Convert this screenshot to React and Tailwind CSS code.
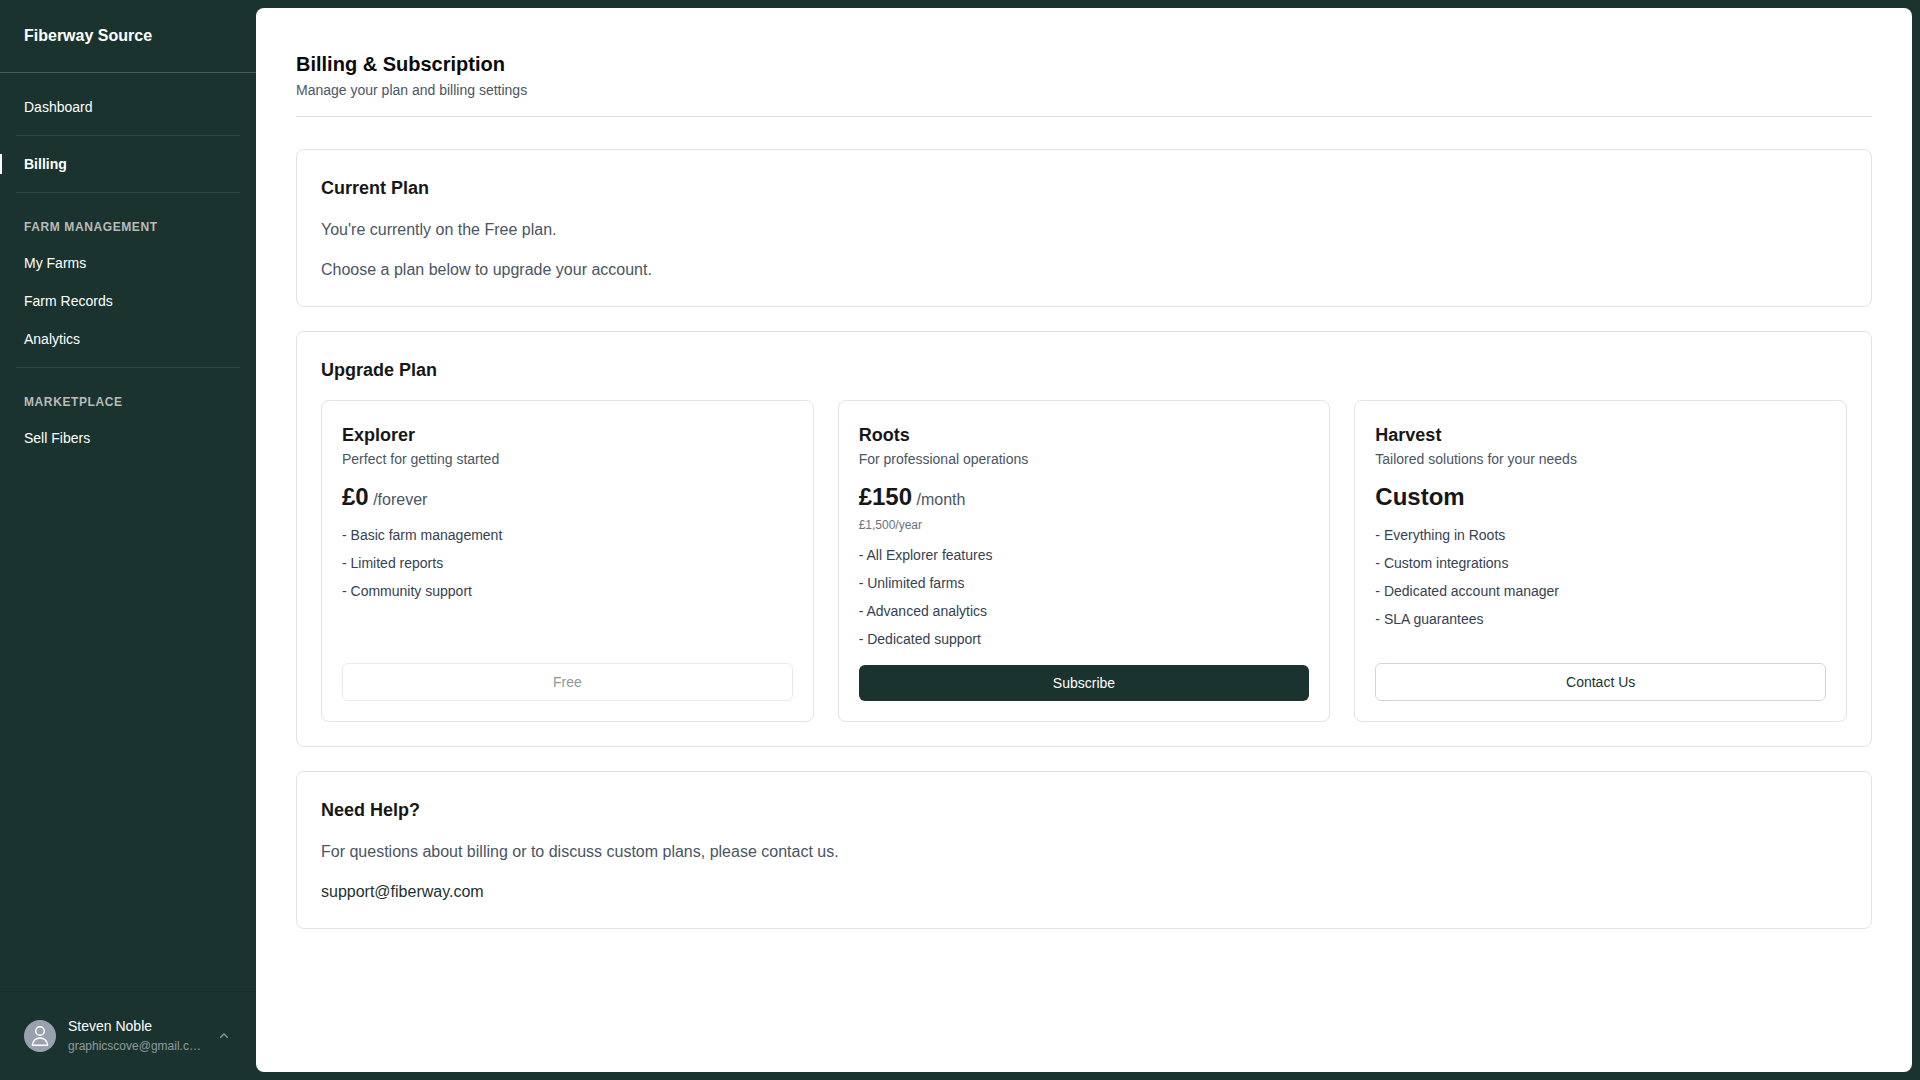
import { useState } from "react";

const PLANS = [
  {
    name: "Explorer",
    description: "Perfect for getting started",
    price: "£0",
    period: "/forever",
    features: ["Basic farm management", "Limited reports", "Community support"],
    action: "Free",
    variant: "outline",
    disabled: true
  },
  {
    name: "Roots",
    description: "For professional operations",
    price: "£150",
    period: "/month",
    yearly: "£1,500/year",
    features: [
      "All Explorer features",
      "Unlimited farms",
      "Advanced analytics",
      "Dedicated support"
    ],
    action: "Subscribe",
    variant: "primary"
  },
  {
    name: "Harvest",
    description: "Tailored solutions for your needs",
    price: "Custom",
    features: [
      "Everything in Roots",
      "Custom integrations",
      "Dedicated account manager",
      "SLA guarantees"
    ],
    action: "Contact Us",
    variant: "outline"
  }
];

const buttonStyles = {
  primary: "bg-[#1a332f] text-white hover:bg-[#24443f]",
  outline: "border border-gray-300 bg-white text-[#1a332f] enabled:hover:bg-gray-50"
};

const NavItem = ({ label, active, onSelect }) => (
  <a
    href={`#${label.toLowerCase().replace(" ", "-")}`}
    onClick={() => onSelect(label)}
    aria-current={active ? "page" : undefined}
    className={`relative block px-2 py-2 text-sm text-white ${active ? "font-bold" : ""}`}
  >
    {active && <span className="absolute -left-4 top-2 h-5 w-0.5 bg-white" />}
    {label}
  </a>
);

const NavDivider = () => <hr className="my-2 border-white/10" />;

const NavHeading = ({ children }) => (
  <h2 className="px-2 pb-2 pt-4 text-xs font-bold uppercase tracking-wider text-[#bababa]">
    {children}
  </h2>
);

const Sidebar = () => {
  const [active, setActive] = useState("Billing");

  const item = (label) => (
    <NavItem label={label} active={active === label} onSelect={setActive} />
  );

  return (
    <aside className="flex w-64 shrink-0 flex-col">
      <div className="border-b border-white/20 p-6 text-base font-bold text-white">
        Fiberway Source
      </div>

      <nav className="flex flex-1 flex-col gap-0.5 p-4">
        {item("Dashboard")}
        <NavDivider />
        {item("Billing")}
        <NavDivider />
        <NavHeading>Farm Management</NavHeading>
        {item("My Farms")}
        {item("Farm Records")}
        {item("Analytics")}
        <NavDivider />
        <NavHeading>Marketplace</NavHeading>
        {item("Sell Fibers")}
      </nav>

      <button
        type="button"
        className="flex items-center gap-3 border-t border-black/10 p-6 text-left"
      >
        <span className="flex size-8 shrink-0 items-center justify-center rounded-full bg-gray-400">
          <svg
            viewBox="0 0 32 32"
            className="size-8"
            fill="none"
            stroke="white"
            strokeWidth="1.5"
            strokeLinejoin="round"
            aria-hidden="true"
          >
            <circle cx="16" cy="11" r="4.3" />
            <path d="M8.5 25.3c0-4.4 3.2-7.4 7.5-7.4s7.5 3 7.5 7.4z" />
          </svg>
        </span>
        <span className="min-w-0 flex-1 leading-5">
          <span className="block text-sm text-white">Steven Noble</span>
          <span className="block truncate text-xs leading-5 text-white/50">
            graphicscove@gmail.com
          </span>
        </span>
        <svg
          viewBox="0 0 16 16"
          className="size-4 shrink-0 text-white/50"
          fill="none"
          stroke="currentColor"
          strokeWidth="1.3"
          aria-hidden="true"
        >
          <path d="M4.2 9.8 8 6l3.8 3.8" />
        </svg>
      </button>
    </aside>
  );
};

const Card = ({ title, children }) => (
  <section className="rounded-lg border border-[#e3e3e3] p-6">
    <h2 className="mb-4 text-lg font-bold leading-7 text-[#171717]">{title}</h2>
    {children}
  </section>
);

const PlanCard = ({ plan }) => (
  <article className="flex flex-col rounded-lg border border-[#e3e3e3] p-5">
    <h3 className="text-lg font-bold leading-7 text-[#171717]">{plan.name}</h3>
    <p className="text-sm text-gray-600">{plan.description}</p>

    <div className="my-3">
      <p className="text-2xl font-bold text-[#171717]">
        {plan.price}
        {plan.period && (
          <span className="text-base font-normal leading-6 text-gray-600"> {plan.period}</span>
        )}
      </p>
      {plan.yearly && <p className="mt-1 text-xs text-gray-500">{plan.yearly}</p>}
    </div>

    <ul className="mb-4 space-y-2 text-sm text-gray-700">
      {plan.features.map((feature) => (
        <li key={feature}>- {feature}</li>
      ))}
    </ul>

    <button
      type="button"
      disabled={plan.disabled}
      className={`mt-auto rounded-md px-4 py-2 text-sm disabled:opacity-50 ${buttonStyles[plan.variant]}`}
    >
      {plan.action}
    </button>
  </article>
);

const App = () => (
  <div className="flex min-h-screen bg-[#1a332f] font-['Liberation_Sans',Arial,sans-serif]">
    <Sidebar />

    <main className="my-2 mr-2 min-w-0 flex-1 rounded-lg bg-white p-10">
      <header className="mb-8 border-b border-[#e3e3e3] pb-4">
        <h1 className="text-xl font-bold leading-8 text-[#0a0a0a]">Billing &amp; Subscription</h1>
        <p className="text-sm text-gray-600">Manage your plan and billing settings</p>
      </header>

      <div className="space-y-6">
        <Card title="Current Plan">
          <div className="space-y-4 text-gray-600">
            <p>You're currently on the Free plan.</p>
            <p>Choose a plan below to upgrade your account.</p>
          </div>
        </Card>

        <Card title="Upgrade Plan">
          <div className="grid gap-6 md:grid-cols-3">
            {PLANS.map((plan) => (
              <PlanCard key={plan.name} plan={plan} />
            ))}
          </div>
        </Card>

        <Card title="Need Help?">
          <div className="space-y-4 text-gray-600">
            <p>For questions about billing or to discuss custom plans, please contact us.</p>
            <p>
              <a href="mailto:support@fiberway.com" className="text-[#1a332f] hover:underline">
                support@fiberway.com
              </a>
            </p>
          </div>
        </Card>
      </div>
    </main>
  </div>
);

export default App;
